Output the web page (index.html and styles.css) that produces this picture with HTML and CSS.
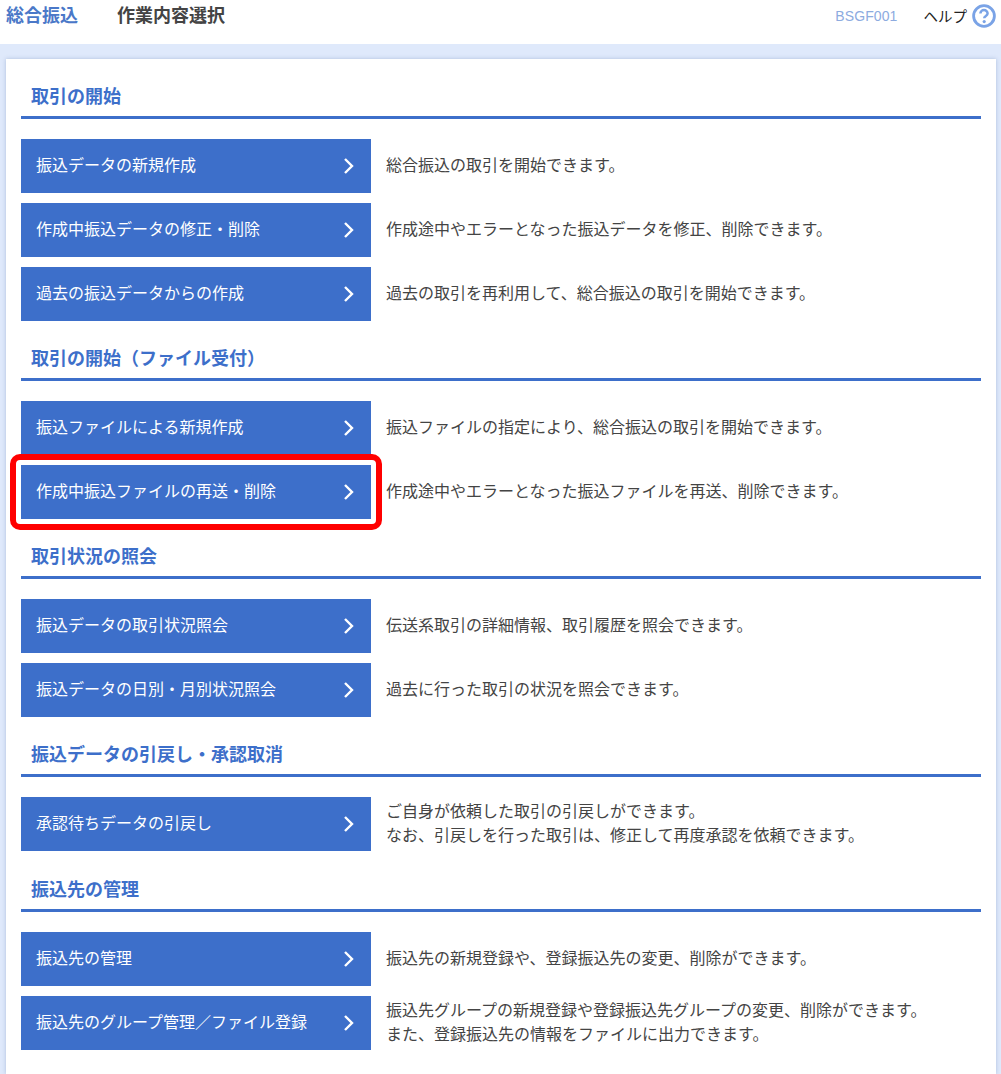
FILE: index.html
```html
<!DOCTYPE html>
<html lang="ja">
<head>
<meta charset="utf-8">
<title>作業内容選択</title>
<link rel="stylesheet" href="styles.css">
</head>
<body>
<header class="top">
  <div class="crumbs"><span class="crumb-main">総合振込</span><span class="crumb-sub">作業内容選択</span></div>
  <div class="top-right"><span class="code">BSGF001</span><a class="help"><span class="help-label">ヘルプ</span><svg class="help-icon" width="24" height="24" viewBox="0 0 24 24"><circle cx="12" cy="12" r="10.4" fill="#fff" stroke="#7aa3e6" stroke-width="2.8"/><path d="M8.4 9.6a3.6 3.6 0 0 1 7.2 0c0 2.4-3.4 2.3-3.4 4.6" fill="none" stroke="#7aa3e6" stroke-width="2.5"/><circle cx="12.2" cy="17.6" r="1.6" fill="#7aa3e6"/></svg></a></div>
</header>
<main class="panel">
  <section class="sec">
    <h2 class="sec-title">取引の開始</h2>
    <div class="row"><a class="btn">振込データの新規作成<svg class="chev" width="12" height="18" viewBox="0 0 12 18"><path d="M2 2l7 7-7 7" fill="none" stroke="#fff" stroke-width="2.4"/></svg></a><p class="desc">総合振込の取引を開始できます。</p></div>
    <div class="row"><a class="btn">作成中振込データの修正・削除<svg class="chev" width="12" height="18" viewBox="0 0 12 18"><path d="M2 2l7 7-7 7" fill="none" stroke="#fff" stroke-width="2.4"/></svg></a><p class="desc">作成途中やエラーとなった振込データを修正、削除できます。</p></div>
    <div class="row"><a class="btn">過去の振込データからの作成<svg class="chev" width="12" height="18" viewBox="0 0 12 18"><path d="M2 2l7 7-7 7" fill="none" stroke="#fff" stroke-width="2.4"/></svg></a><p class="desc">過去の取引を再利用して、総合振込の取引を開始できます。</p></div>
  </section>
  <section class="sec">
    <h2 class="sec-title">取引の開始（ファイル受付）</h2>
    <div class="row"><a class="btn">振込ファイルによる新規作成<svg class="chev" width="12" height="18" viewBox="0 0 12 18"><path d="M2 2l7 7-7 7" fill="none" stroke="#fff" stroke-width="2.4"/></svg></a><p class="desc">振込ファイルの指定により、総合振込の取引を開始できます。</p></div>
    <div class="row"><a class="btn btn-marked">作成中振込ファイルの再送・削除<svg class="chev" width="12" height="18" viewBox="0 0 12 18"><path d="M2 2l7 7-7 7" fill="none" stroke="#fff" stroke-width="2.4"/></svg></a><p class="desc">作成途中やエラーとなった振込ファイルを再送、削除できます。</p></div>
  </section>
  <section class="sec">
    <h2 class="sec-title">取引状況の照会</h2>
    <div class="row"><a class="btn">振込データの取引状況照会<svg class="chev" width="12" height="18" viewBox="0 0 12 18"><path d="M2 2l7 7-7 7" fill="none" stroke="#fff" stroke-width="2.4"/></svg></a><p class="desc">伝送系取引の詳細情報、取引履歴を照会できます。</p></div>
    <div class="row"><a class="btn">振込データの日別・月別状況照会<svg class="chev" width="12" height="18" viewBox="0 0 12 18"><path d="M2 2l7 7-7 7" fill="none" stroke="#fff" stroke-width="2.4"/></svg></a><p class="desc">過去に行った取引の状況を照会できます。</p></div>
  </section>
  <section class="sec sec-wide">
    <h2 class="sec-title">振込データの引戻し・承認取消</h2>
    <div class="row"><a class="btn">承認待ちデータの引戻し<svg class="chev" width="12" height="18" viewBox="0 0 12 18"><path d="M2 2l7 7-7 7" fill="none" stroke="#fff" stroke-width="2.4"/></svg></a><p class="desc">ご自身が依頼した取引の引戻しができます。<br>なお、引戻しを行った取引は、修正して再度承認を依頼できます。</p></div>
  </section>
  <section class="sec">
    <h2 class="sec-title">振込先の管理</h2>
    <div class="row"><a class="btn">振込先の管理<svg class="chev" width="12" height="18" viewBox="0 0 12 18"><path d="M2 2l7 7-7 7" fill="none" stroke="#fff" stroke-width="2.4"/></svg></a><p class="desc">振込先の新規登録や、登録振込先の変更、削除ができます。</p></div>
    <div class="row"><a class="btn">振込先のグループ管理／ファイル登録<svg class="chev" width="12" height="18" viewBox="0 0 12 18"><path d="M2 2l7 7-7 7" fill="none" stroke="#fff" stroke-width="2.4"/></svg></a><p class="desc">振込先グループの新規登録や登録振込先グループの変更、削除ができます。<br>また、登録振込先の情報をファイルに出力できます。</p></div>
  </section>
</main>
</body>
</html>
```
FILE: styles.css
```css
* { box-sizing: border-box; }
html, body { margin: 0; height: 1074px; overflow: hidden; }
body {
  background: #dfe9fb;
  font-family: "Noto Sans CJK JP", "Noto Sans", sans-serif;
  color: #444;
  font-size: 16px;
}
.top {
  height: 44px;
  background: #fff;
  display: flex;
  justify-content: space-between;
  padding: 0 5px 12px 6px;
  align-items: center;
}
.crumbs { display: flex; gap: 39px; padding-bottom: 4px; font-size: 18px; font-weight: 700; line-height: 30px; }
.crumb-main { color: #4a78c8; }
.crumb-sub { color: #444; }
.top-right { display: flex; align-items: center; gap: 26px; }
.code { color: #8dabdf; font-family: "Liberation Sans", sans-serif; font-size: 14px; letter-spacing: .1px; }
.help { display: flex; align-items: center; gap: 5px; color: #222; font-size: 14.5px; }
.help-label { padding-bottom: 2px; }
.panel {
  margin: 15px 5px 0 6px;
  background: #fff;
  padding: 20px 15px 0;
  height: 1015px;
  box-shadow: 0 0 4px rgba(110,135,185,.45);
}
.sec { padding-bottom: 20px; }
.sec-wide { padding-bottom: 21px; }
.sec-title {
  margin: 0 0 20px;
  height: 40px;
  padding: 0 0 0 10px;
  border-bottom: 3px solid #3d6fca;
  color: #3d6fca;
  font-size: 18px;
  font-weight: 700;
  line-height: 33px;
}
.row { display: flex; align-items: center; margin-bottom: 10px; }
.row:last-child { margin-bottom: 0; }
.btn {
  position: relative;
  flex: none;
  width: 350px;
  height: 54px;
  padding: 0 16px 4px 15px;
  background: #3d6fca;
  color: #fff;
  display: flex;
  align-items: center;
  justify-content: space-between;
  font-size: 16px;
}
.chev { margin-top: 4px; }
.btn-marked::after {
  content: "";
  position: absolute;
  inset: -11px;
  border: 6px solid #f00;
  border-radius: 10px;
}
.desc { margin: 0 0 0 15px; padding-bottom: 4px; font-size: 16px; line-height: 24px; color: #444; }
```
